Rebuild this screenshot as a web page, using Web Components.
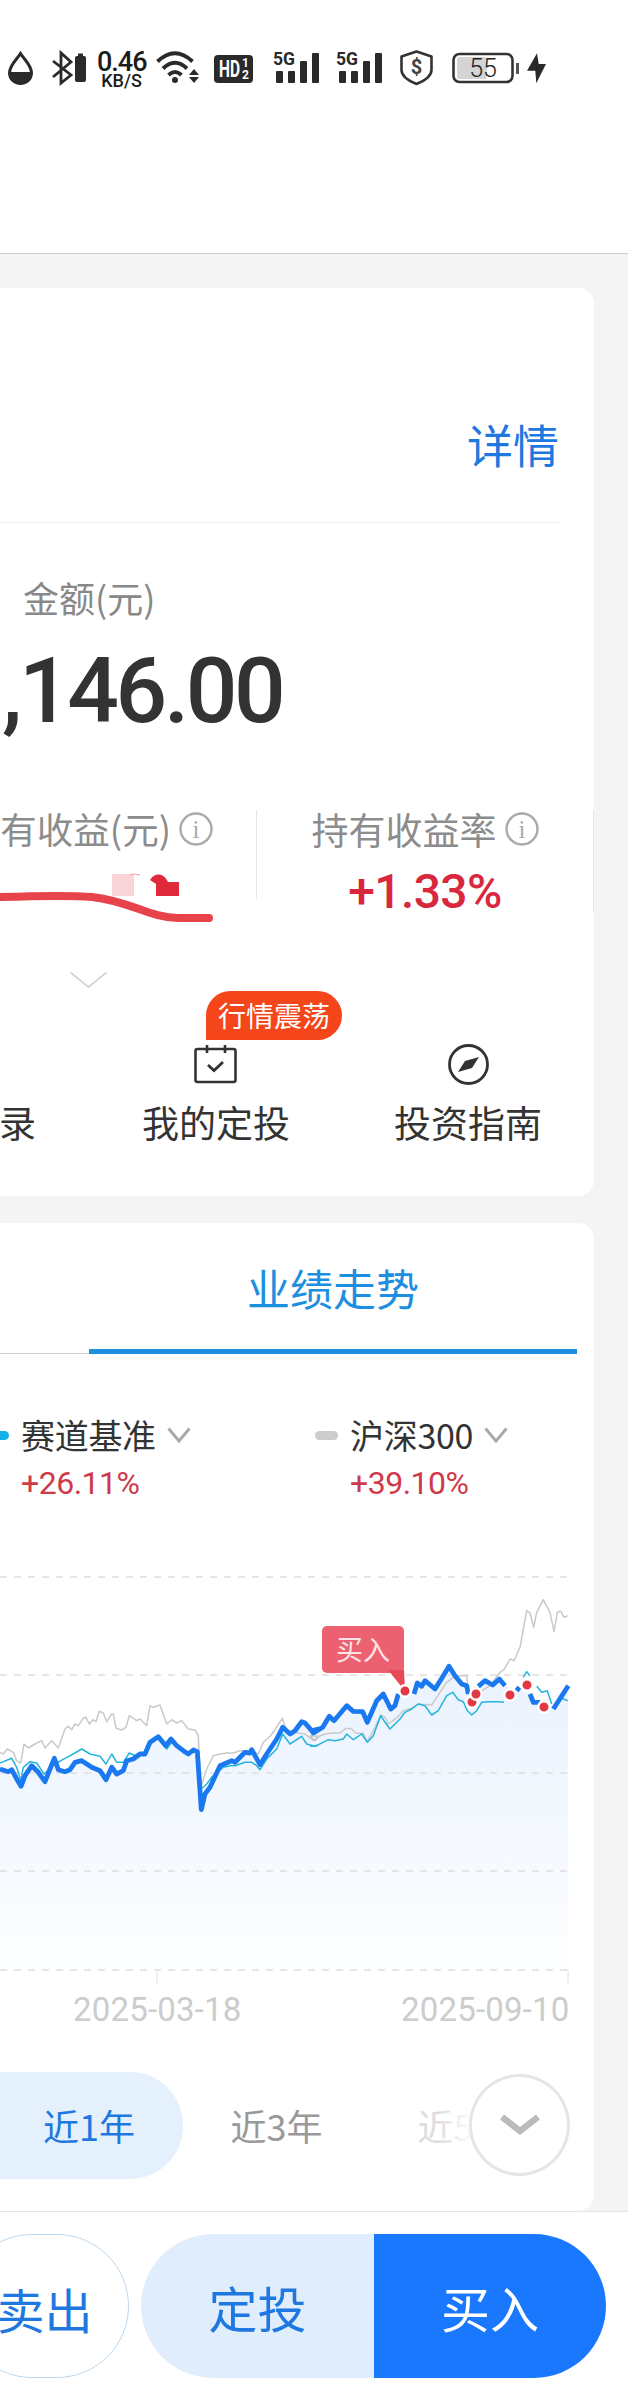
<!DOCTYPE html>
<html lang="zh">
<head>
<meta charset="utf-8">
<title>持仓详情</title>
<style>
  html, body { margin: 0; padding: 0; background: #f4f4f4; }
  body { width: 628px; height: 2398px; overflow: hidden; font-family: "Noto Sans CJK SC", "Noto Sans", sans-serif; color: #333; }
  holding-card { margin-top: 34px; }
  trend-card { margin-top: 27px; }
</style>
</head>
<body>
<status-bar></status-bar>
<holding-card></holding-card>
<trend-card></trend-card>
<trade-bar></trade-bar>

<script>
const NUM = '"Roboto", "Liberation Sans", sans-serif';

class StatusBar extends HTMLElement {
    constructor() {
        super();
        const shadow = this.attachShadow({ mode: "open" });
        const signal = `
            <text x="0" y="15" font-family="Roboto" font-weight="700" font-size="19" fill="#2a2a2a" textLength="22" lengthAdjust="spacingAndGlyphs">5G</text>
            <rect x="3" y="21" width="7" height="12" rx="1" fill="#2a2a2a"/>
            <rect x="15" y="21" width="7" height="12" rx="1" fill="#2a2a2a"/>
            <rect x="27" y="11" width="7" height="22" rx="1" fill="#2a2a2a"/>
            <rect x="39" y="3" width="7" height="30" rx="1" fill="#2a2a2a"/>`;
        shadow.innerHTML = `
        <style>
            :host { display: flex; box-sizing: border-box; height: 254px; padding: 50px 0 0 8px; background: #fff; border-bottom: 1px solid #ccc; align-items: flex-start; }
            svg { display: block; height: 38px; flex: none; overflow: visible; }
            .speed { width: 49px; margin-left: 11px; flex: none; text-align: center; font-family: ${NUM}; color: #1c1c1c; }
            .speed b { display: block; font-weight: 500; font-size: 27px; line-height: 23px; letter-spacing: -1px; margin-top: 1px; }
            .speed i { display: block; font-style: normal; font-weight: 500; font-size: 18px; line-height: 14px; white-space: nowrap; }
        </style>
        <svg width="25" viewBox="0 0 25 38">
            <path d="M12.5 3.5C8.5 10 1.5 15 1.5 23a11 10.5 0 0 0 22 0C23.5 15 16.5 10 12.5 3.5Z" fill="none" stroke="#2a2a2a" stroke-width="3"/>
            <path d="M1.5 22H23.5A11 11.5 0 0 1 1.5 22Z" fill="#2a2a2a"/>
        </svg>
        <svg width="34" viewBox="0 0 34 38" style="margin-left:19px">
            <path d="M1 11L19 25L9 33V3L19 12L1 27" fill="none" stroke="#2a2a2a" stroke-width="2.8"/>
            <rect x="23" y="6" width="11" height="26" rx="2" fill="#2a2a2a"/>
            <rect x="26" y="3.5" width="5" height="3" fill="#2a2a2a"/>
        </svg>
        <div class="speed"><b>0.46</b><i>KB/S</i></div>
        <svg width="44" viewBox="0 0 44 38" style="margin-left:9px">
            <g fill="none" stroke="#2a2a2a" stroke-width="4">
                <path d="M2.5 11.5Q20 -5 37.5 11.5"/>
                <path d="M8 18.5Q20 7 32 18.5"/>
                <path d="M13.5 25Q20 19 26.5 25"/>
            </g>
            <circle cx="20" cy="30" r="3" fill="#2a2a2a"/>
            <path d="M39 19L44 25H34ZM34 27H44L39 33Z" fill="#2a2a2a"/>
        </svg>
        <svg width="39" viewBox="0 0 39 38" style="margin-left:15px">
            <rect x="0" y="5" width="39" height="28" rx="4" fill="#2a2a2a"/>
            <text x="5" y="27" font-family="Roboto" font-weight="700" font-size="23" fill="#fff" textLength="21" lengthAdjust="spacingAndGlyphs">HD</text>
            <text x="28" y="17" font-family="Roboto" font-weight="700" font-size="12" fill="#fff">1</text>
            <text x="28" y="29" font-family="Roboto" font-weight="700" font-size="12" fill="#fff">2</text>
        </svg>
        <svg width="46" viewBox="0 0 46 38" style="margin-left:20px">${signal}</svg>
        <svg width="46" viewBox="0 0 46 38" style="margin-left:17px">${signal}</svg>
        <svg width="33" viewBox="0 0 33 38" style="margin-left:18px">
            <path d="M16.5 1.5L31.5 6.5V20C31.5 27 24 31 16.5 34C9 31 1.5 27 1.5 20V6.5Z" fill="none" stroke="#333" stroke-width="2.6" stroke-linejoin="round"/>
            <text x="16.5" y="24" text-anchor="middle" font-family="Roboto" font-weight="700" font-size="20" fill="#444">$</text>
        </svg>
        <svg width="67" viewBox="0 0 67 38" style="margin-left:19px">
            <rect x="5" y="7" width="30" height="22" rx="2" fill="#d4d4d4"/>
            <rect x="1.5" y="4" width="59" height="28" rx="6" fill="none" stroke="#333" stroke-width="2.6"/>
            <text x="31" y="27" text-anchor="middle" font-family="Roboto" font-weight="300" font-size="25" fill="#222">55</text>
            <rect x="64" y="13" width="3" height="11" fill="#555"/>
        </svg>
        <svg width="19" viewBox="0 0 19 38" style="margin-left:8px">
            <path d="M10 3.3L0 20.7H8.3L9.3 33.3L19 14H11.7Z" fill="#2a2a2a"/>
        </svg>`;
    }
}

class InfoIcon extends HTMLElement {
    constructor() {
        super();
        const shadow = this.attachShadow({ mode: "open" });
        shadow.innerHTML = `
        <style>
            :host { display: block; width: 34px; height: 34px; flex: none; }
            svg { display: block; }
        </style>
        <svg width="34" height="34" viewBox="0 0 34 34">
            <circle cx="17" cy="17" r="15.5" fill="none" stroke="#aaa" stroke-width="2.4"/>
            <text x="17" y="26" text-anchor="middle" font-family="Liberation Serif" font-size="25" fill="#aaa">i</text>
        </svg>`;
    }
}

class NavItem extends HTMLElement {
    constructor() {
        super();
        const shadow = this.attachShadow({ mode: "open" });
        shadow.innerHTML = `
        <style>
            :host { display: flex; position: relative; flex-direction: column; align-items: center; }
            .icon { height: 60px; display: flex; justify-content: center; }
            .label { font-size: 37px; line-height: 36px; color: #333; white-space: nowrap; }
        </style>
        <div class="icon"><slot name="icon"></slot></div>
        <div class="label"><slot></slot></div>
        <slot name="badge"></slot>`;
    }
}

class HoldingCard extends HTMLElement {
    constructor() {
        super();
        const shadow = this.attachShadow({ mode: "open" });
        shadow.innerHTML = `
        <style>
            :host { display: block; box-sizing: border-box; width: 594px; height: 908px; background: #fff; border-radius: 0 16px 16px 0; overflow: hidden; }
            .head { box-sizing: border-box; height: 234px; padding: 131px 35px 0 0; text-align: right; font-size: 46px; line-height: 48px; color: #1f78e0; }
            .rule { height: 1px; background: #eee; margin-right: 34px; }
            .amount-label { margin: 53px 0 0 23px; font-size: 36px; line-height: 42px; color: #888; }
            .amount { margin: 28px 0 0 2px; font-family: ${NUM}; font-weight: 500; font-size: 91px; line-height: 90px; letter-spacing: -3.4px; color: #333; white-space: nowrap; }
            .metrics { position: relative; display: grid; grid-template-columns: 256px 1px 1fr 1px; height: 102px; margin-top: 74px; }
            .sep { background: #e6e6e6; height: 89px; }
            .sep.end { height: 102px; }
            .metric { min-width: 0; display: flex; flex-direction: column; }
            .metric .top { display: flex; align-items: center; gap: 8px; height: 38px; font-size: 37px; line-height: 38px; color: #8c8c8c; white-space: nowrap; }
            .metric.left .top { justify-content: flex-end; padding-right: 43px; font-size: 36.5px; }
            .metric.right .top { justify-content: center; }
            .value { margin-top: 21px; text-align: center; font-family: ${NUM}; font-weight: 500; font-size: 48px; line-height: 46px; letter-spacing: -0.6px; color: #d9283e; }
            .scrawl { position: absolute; left: 0; top: 0; }
            .more { display: block; margin: 60px 0 0 70px; }
            nav { display: grid; grid-template-columns: 90px 252px 252px; margin-top: 56px; }
            nav-item.clip { align-items: flex-end; padding-right: 54px; }
            .tag { position: absolute; right: 0; top: -53px; height: 49px; width: 136px; box-sizing: border-box; background: #f5451a; color: #fff; border-radius: 25px 25px 25px 0; font-size: 28px; line-height: 49px; text-align: center; white-space: nowrap; }
            svg { display: block; }
        </style>
        <div class="head">详情</div>
        <div class="rule"></div>
        <div class="amount-label">金额(元)</div>
        <div class="amount">,146.00</div>
        <div class="metrics">
            <div class="metric left">
                <div class="top"><span>有收益(元)</span><info-icon></info-icon></div>
            </div>
            <div class="sep"></div>
            <div class="metric right">
                <div class="top"><span>持有收益率</span><info-icon></info-icon></div>
                <div class="value">+1.33%</div>
            </div>
            <div class="sep end"></div>
            <svg class="scrawl" width="240" height="120" viewBox="0 810 240 120">
                <rect x="112" y="874" width="22" height="22" fill="#f9d5da"/>
                <path d="M130 875q4-2 10 0" fill="none" stroke="#e8a0a8" stroke-width="1"/>
                <path d="M156 896V884L150 880C155 872 164 873 168 882H179V896Z" fill="#e02a3c"/>
                <path d="M0 897C30 896 70 895 92 897C130 901 150 918 178 918H209" fill="none" stroke="#e8434a" stroke-width="8" stroke-linecap="round"/>
            </svg>
        </div>
        <svg class="more" width="37" height="16" viewBox="0 0 37 16"><path d="M0.5 0.5L18.5 15L36.5 0.5" fill="none" stroke="#ccc" stroke-width="1.6"/></svg>
        <nav>
            <nav-item class="clip"><span slot="icon"></span>录</nav-item>
            <nav-item>
                <svg slot="icon" width="44" height="40" viewBox="0 0 44 40">
                    <rect x="1.5" y="5" width="40" height="33" rx="2" fill="none" stroke="#333" stroke-width="2.6"/>
                    <path d="M13 1V9M31 1V9" stroke="#333" stroke-width="2.6"/>
                    <path d="M14 21L20 26.5L29 18" fill="none" stroke="#333" stroke-width="2.8"/>
                </svg>
                我的定投
                <div slot="badge" class="tag" id="tag">行情震荡</div>
            </nav-item>
            <nav-item>
                <svg slot="icon" width="41" height="41" viewBox="0 0 41 41">
                    <circle cx="20.5" cy="20.5" r="19" fill="none" stroke="#333" stroke-width="2.8"/>
                    <path d="M31 13L24 24L10 28L17 17Z" fill="#333"/>
                </svg>
                投资指南
            </nav-item>
        </nav>`;
    }
}

class LegendItem extends HTMLElement {
    connectedCallback() {
        const shadow = this.shadowRoot || this.attachShadow({ mode: "open" });
        shadow.innerHTML = `
        <style>
            :host { display: block; }
            .row { display: flex; align-items: center; height: 36px; white-space: nowrap; }
            .mark { width: 23px; height: 9px; border-radius: 5px; background: ${this.getAttribute("color")}; margin-right: 12px; }
            .name { font-size: 34px; line-height: 36px; color: #333; letter-spacing: -0.3px; }
            svg { display: block; margin-left: 11px; }
            .value { margin: 14px 0 0 35px; font-family: ${NUM}; font-size: 32px; line-height: 32px; letter-spacing: -0.5px; color: #cf3a4a; }
        </style>
        <div class="row">
            <div class="mark"></div>
            <div class="name">${this.getAttribute("name")}</div>
            <svg width="24" height="16" viewBox="0 0 24 16"><path d="M1.5 1.5L12 14L22.5 1.5" fill="none" stroke="#aaa" stroke-width="3"/></svg>
        </div>
        <div class="value">${this.getAttribute("value")}</div>`;
    }
}

// points read off the reference in zoomed coords: [scale 3, origin x, origin y]
const zA = (pts) => pts.map(([x, y]) => [x / 3, 1600 + y / 3]);
const zB = (pts) => pts.map(([x, y]) => [310 + x / 3, 1580 + y / 3]);
const toD = (pts) => "M" + pts.map(([x, y]) => x.toFixed(1) + " " + y.toFixed(1)).join("L");

const blueA = zA([[0,510],[25,518],[35,512],[50,540],[63,562],[75,530],[95,500],[115,520],[135,548],[150,510],[163,478],[175,512],[195,518],[210,512],[225,490],[245,485],[275,505],[300,515],[318,542],[335,505],[350,525],[370,515],[380,485],[400,480],[420,465],[435,465],[450,430],[475,413],[497,440],[513,420],[530,440],[550,455],[565,465],[580,453],[592,458],[604,632],[615,585],[630,565],[660,500],[695,485],[705,490],[735,460],[750,462],[755,452],[780,497],[800,465],[830,420],[848,385],[870,405],[885,395],[905,368],[915,372],[935,395],[955,390]]);
const blue1 = zB([[10,462],[38,445],[58,412],[72,425],[110,380],[130,397],[158,398],[172,430],[200,365],[220,345],[242,390],[255,380],[265,345]]);
const blue2 = zB([[312,345],[322,312],[335,322],[345,305],[375,330],[400,290],[417,262],[435,290],[455,315],[470,320],[475,345]]);
const blue3 = zB([[505,322],[525,305],[548,318],[568,300],[585,320]]);
const blue4 = zB([[620,335],[628,325]]);
const blue5 = zB([[660,345],[670,370],[690,370]]);
const blue6 = zB([[730,390],[775,320]]);
const grayLine = zA([[0,460],[10,465],[22,450],[40,460],[50,485],[62,492],[72,435],[85,447],[105,435],[125,425],[135,447],[155,425],[175,447],[195,390],[205,382],[215,392],[225,375],[235,380],[250,358],[258,355],[268,375],[278,362],[288,368],[298,337],[310,342],[320,368],[335,345],[340,345],[348,388],[365,393],[378,385],[388,350],[410,365],[420,360],[440,380],[450,320],[460,325],[480,318],[500,375],[515,362],[530,372],[545,365],[565,390],[585,393],[595,410],[597,460],[604,560],[620,510],[640,470],[660,465],[680,462],[700,462],[720,455],[755,455],[775,465],[790,430],[810,412],[825,392],[847,358],[860,395],[880,400],[915,405],[940,425],[955,412]])
    .concat(zB([[0,470],[15,485],[28,472],[45,465],[65,462],[90,462],[108,448],[125,450],[138,463],[160,463],[172,487],[190,455],[212,408],[225,415],[235,435],[262,415],[280,395],[305,388],[325,375],[365,378],[390,340],[410,310],[430,295],[450,290],[470,290],[475,345],[500,345],[540,320],[570,280],[582,272],[600,240],[612,245],[630,205],[650,95],[660,102],[671,145],[680,100],[700,62],[720,100],[732,158],[742,100],[752,97],[763,115],[773,110]]));
const cyanA = zA([[0,492],[35,478],[50,505],[62,545],[70,505],[90,488],[110,492],[132,525],[165,495],[195,478],[225,462],[245,450],[270,465],[300,472],[318,495],[335,465],[350,490],[370,490],[388,462],[410,472],[430,465],[450,428],[475,410],[500,450],[515,430],[535,445],[550,455],[570,462],[590,458],[604,570],[620,555],[635,535],[650,520],[670,505],[690,500],[705,500],[735,490],[755,490],[770,500],[780,512],[800,480],[830,450],[848,405],[870,435],[905,412],[920,435],[945,442],[955,438]]);
const cyan1 = zB([[0,502],[20,500],[55,482],[75,485],[100,480],[110,465],[130,482],[155,465],[172,490],[190,470],[212,410],[225,430],[240,450],[270,420],[285,400],[305,390],[325,375],[345,380],[365,408],[385,395],[410,350],[428,340],[445,362],[460,368],[472,395],[485,408],[500,395],[515,370],[540,368],[565,368],[582,370]]);
const cyan2 = zB([[640,295],[650,278],[660,290]]);
const cyan3 = zB([[680,322],[695,340],[712,335],[725,375]]);
const cyan4 = zB([[755,358],[773,365]]);
const areaTop = blueA.concat(blue1, zB([[285,335]]), blue2, blue3, blue4, blue5, blue6);

class TrendChart extends HTMLElement {
    constructor() {
        super();
        const shadow = this.attachShadow({ mode: "open" });
        const grid = [1578, 1676, 1774, 1872, 1971].map((y) =>
            `<line x1="0" x2="568" y1="${y}" y2="${y}" stroke="#dedede" stroke-width="1.4" stroke-dasharray="7 7"/>`).join("");
        const dots = [[472, 1703], [476, 1695], [510, 1696], [527, 1686], [544, 1708], [405, 1692]].map(([x, y]) =>
            `<circle cx="${x}" cy="${y}" r="5.7" fill="#e23745" stroke="#fff" stroke-width="2.4"/>`).join("");
        const wide = (d) => `<path d="${toD(d)}" fill="none" stroke="#1a78f0" stroke-width="4.8" stroke-linejoin="round"/>`;
        const thin = (d, c) => `<path d="${toD(d)}" fill="none" stroke="${c}" stroke-width="1.5" stroke-linejoin="round"/>`;
        shadow.innerHTML = `
        <style>
            :host { display: block; position: relative; height: 426px; }
            svg { display: block; }
            .tip { position: absolute; left: 322px; top: 67px; width: 82px; height: 47px; border-radius: 5px; background: rgba(232, 73, 90, .87); color: #fde3e6; font-size: 27px; line-height: 46px; text-align: center; }
        </style>
        <svg width="594" height="426" viewBox="0 1560 594 426">
            <defs>
                <linearGradient id="fade" x1="0" y1="1640" x2="0" y2="1971" gradientUnits="userSpaceOnUse">
                    <stop offset="0" stop-color="#e8f1fe"/>
                    <stop offset="1" stop-color="#fdfeff"/>
                </linearGradient>
            </defs>
            <path d="${toD(areaTop)}L568 1971L0 1971Z" fill="url(#fade)"/>
            ${grid}
            <path d="M157 1971V1985M568 1971V1985" stroke="#dedede" stroke-width="1"/>
            ${thin(grayLine, "#c9c9c9")}
            ${thin(cyanA, "#24b4dc")}${thin(cyan1, "#24b4dc")}${thin(cyan2, "#24b4dc")}${thin(cyan3, "#24b4dc")}${thin(cyan4, "#24b4dc")}
            ${wide(blueA.concat(blue1))}${wide(blue2)}${wide(blue3)}${wide(blue4)}${wide(blue5)}${wide(blue6)}
            <path d="M388 1671H404L405 1692Z" fill="#e23745" opacity=".9"/>
            ${dots}
        </svg>
        <div class="tip">买入</div>`;
    }
}

class TrendCard extends HTMLElement {
    constructor() {
        super();
        const shadow = this.attachShadow({ mode: "open" });
        shadow.innerHTML = `
        <style>
            :host { display: block; box-sizing: border-box; width: 594px; height: 988px; background: #fff; border-radius: 0 16px 16px 0; overflow: hidden; }
            .tabs { display: grid; grid-template-columns: 89px 488px; height: 131px; }
            .tabs .blank { border-bottom: 1px solid #ccc; }
            .tabs .on { box-sizing: border-box; border-bottom: 5px solid #1e8fe0; padding-top: 39px; text-align: center; font-size: 43px; line-height: 50px; color: #1e8fe0; }
            .legend { display: grid; grid-template-columns: 315px 1fr; margin: 63px 0 0 -14px; }
            .legend legend-item:last-child { margin-left: 14px; }
            trend-chart { margin-top: 60px; }
            .dates { display: grid; grid-template-columns: 328px 1fr; box-sizing: border-box; padding-left: 73px; font-family: ${NUM}; font-size: 33px; line-height: 32px; letter-spacing: 0.2px; color: #ccc; height: 32px; margin-top: 9px; white-space: nowrap; }
            .range { position: relative; display: flex; margin-top: 46px; height: 107px; font-size: 36px; line-height: 107px; text-align: center; color: #999; white-space: nowrap; }
            .range div { flex: none; width: 187px; }
            .range .on { width: 178px; padding-right: 5px; background: #e5f0fd; border-radius: 0 53px 53px 0; color: #1e78e0; }
            .range .off { color: #ddd; }
            .fade { position: absolute; left: 438px; top: 0; width: 36px; height: 107px; background: linear-gradient(to right, rgba(255,255,255,0), #fff); }
            .open { position: absolute; left: 469px; top: 2px; box-sizing: border-box; width: 101px; height: 102px; border: 3px solid #e5e5e5; border-radius: 50%; background: #fff; display: flex; align-items: center; justify-content: center; }
        </style>
        <div class="tabs"><div class="blank"></div><div class="on">业绩走势</div></div>
        <div class="legend">
            <legend-item name="赛道基准" value="+26.11%" color="#14b0ea"></legend-item>
            <legend-item name="沪深300" value="+39.10%" color="#cccccc"></legend-item>
        </div>
        <trend-chart></trend-chart>
        <div class="dates"><span>2025-03-18</span><span>2025-09-10</span></div>
        <div class="range">
            <div class="on">近1年</div>
            <div>近3年</div>
            <div class="off">近5年</div>
            <span class="fade"></span>
            <span class="open"><svg width="40" height="22" viewBox="0 0 40 22"><path d="M2 3L20 17L38 3" fill="none" stroke="#bbb" stroke-width="6.5"/></svg></span>
        </div>`;
    }
}

class TradeBar extends HTMLElement {
    constructor() {
        super();
        const shadow = this.attachShadow({ mode: "open" });
        shadow.innerHTML = `
        <style>
            :host { display: flex; box-sizing: border-box; height: 187px; background: #fff; border-top: 1px solid #e5e5e5; padding: 22px 0 0 0; }
            div { height: 144px; flex: none; box-sizing: border-box; text-align: center; font-size: 49px; line-height: 146px; }
            .sell { width: 169px; margin-left: -40px; border: 1px solid #bcd8ef; border-radius: 72px; color: #1e78e0; font-size: 48px; }
            .plan { width: 233px; margin-left: 12px; background: #e0edfd; border-radius: 72px 0 0 72px; color: #1e78e0; }
            .buy { width: 232px; background: #1a78ff; border-radius: 0 72px 72px 0; color: #fff; }
        </style>
        <div class="sell">卖出</div>
        <div class="plan">定投</div>
        <div class="buy">买入</div>`;
    }
}

customElements.define("status-bar", StatusBar);
customElements.define("info-icon", InfoIcon);
customElements.define("nav-item", NavItem);
customElements.define("holding-card", HoldingCard);
customElements.define("legend-item", LegendItem);
customElements.define("trend-chart", TrendChart);
customElements.define("trend-card", TrendCard);
customElements.define("trade-bar", TradeBar);
</script>
</body>
</html>
